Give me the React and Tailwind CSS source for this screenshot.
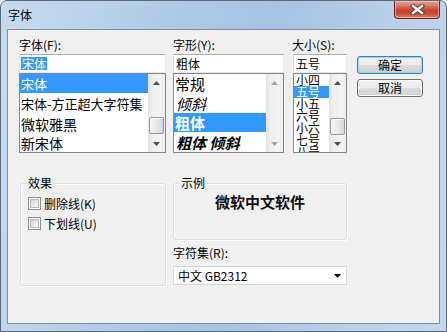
import React from "react";

function Arrow({ down, color = "#4d4d4d" }) {
  return (
    <svg width="7" height="4" viewBox="0 0 7 4">
      <path d={down ? "M0 0H7L3.5 4Z" : "M0 4H7L3.5 0Z"} fill={color} />
    </svg>
  );
}

function VScroll({ thumb, disabled }) {
  const c = disabled ? "#a6a6a6" : "#4d4d4d";
  return (
    <div className="w-[17px] h-full flex flex-col shrink-0 bg-[linear-gradient(to_right,#e2e2e2,#eeeeee_25%,#f4f4f4_75%,#ececec)]">
      <div className="h-[17px] flex items-center justify-center">
        <Arrow color={c} />
      </div>
      <div className="flex-1">
        {thumb ? (
          <div
            className={
              "mx-[1px] rounded-[2px] border border-[#979797] bg-[linear-gradient(to_right,#f6f6f6,#e9e9e9_50%,#d6d6d6)] shadow-[inset_1px_1px_0_#ffffff] " +
              thumb
            }
          />
        ) : null}
      </div>
      <div className="h-[17px] flex items-center justify-center">
        <Arrow down color={c} />
      </div>
    </div>
  );
}

function TextInput({ children }) {
  return (
    <div className="h-[19px] bg-white border border-t-[#abadb3] border-l-[#dbdfe6] border-r-[#e3e9ef] border-b-[#e3e9ef] flex items-center pl-[1px] leading-[13px]">
      {children}
    </div>
  );
}

function Button({ children, def }) {
  return (
    <div
      className={
        "h-[18px] rounded-[3px] border flex items-center justify-center leading-[14px] bg-[linear-gradient(#f2f2f2,#ebebeb_48%,#dddddd_52%,#cfcfcf)] " +
        (def
          ? "border-[#3c7fb1] shadow-[inset_0_0_0_1px_#8fd6f9]"
          : "border-[#707070] shadow-[inset_0_0_0_1px_#fcfcfc]")
      }
    >
      {children}
    </div>
  );
}

function Checkbox({ label }) {
  return (
    <div className="flex items-center gap-[3px] h-[13px]">
      <div className="w-[13px] h-[13px] border border-[#8e8f8f] bg-white p-[1px]">
        <div className="w-full h-full border border-[#b9b9b9] bg-[linear-gradient(135deg,#d6d6d6,#f8f8f8)]" />
      </div>
      <span className="leading-[13px]">{label}</span>
    </div>
  );
}

function CloseButton() {
  return (
    <div className="w-[46px] h-[18px] rounded-b-[4px] border border-t-0 border-[#6a2a23] bg-[linear-gradient(#e8a898,#d77562_30%,#c7402b_55%,#c9493a_75%,#dc8672)] shadow-[inset_0_0_0_1px_rgba(255,210,200,0.5)] flex items-center justify-center">
      <svg width="15" height="11" viewBox="0 0 15 11">
        <path d="M3 2L12 9M12 2L3 9" stroke="#4b3c3a" strokeWidth="4.4" strokeLinecap="square" />
        <path d="M3 2L12 9M12 2L3 9" stroke="#ffffff" strokeWidth="2.4" strokeLinecap="square" />
      </svg>
    </div>
  );
}

export default function App() {
  return (
    <div className="w-[447px] h-[332px] bg-white font-['Noto_Sans_CJK_SC',sans-serif] text-[12px] text-black">
      <div className="w-full h-full flex flex-col rounded-t-[7px] border border-[#5d6878] bg-[linear-gradient(100deg,#c7dbef,#aecae6_35%,#a6c3e2_55%,#b9d0e9_80%,#c2d7ec)] px-[6px] pb-[7px]">
        <div className="h-[28px] flex items-start justify-between">
          <div className="pl-[1px] pt-[7px] leading-[14px]">字体</div>
          <CloseButton />
        </div>
        <div className="flex-1 border border-[#7c8ea3] bg-[#f0f0f0] flex flex-col pl-[11px] pt-[8px]">
          {/* top row */}
          <div className="flex items-start">
            {/* font */}
            <div className="w-[147px] flex flex-col">
              <div className="h-[16px] leading-[14px]">字体(F):</div>
              <TextInput>
                <span className="bg-[#3399ff] text-white h-[13px] leading-[13px] px-[1px]">宋体</span>
              </TextInput>
              <div className="h-[80px] border border-[#828790] bg-white flex">
                <div className="flex-1 flex flex-col overflow-hidden">
                  <div className="h-[19px] shrink-0 bg-[#3399ff] text-white pl-[1px] flex items-center text-[13px] leading-[15px]">宋体</div>
                  <div className="h-[20px] shrink-0 pl-[1px] flex items-center whitespace-nowrap text-[13px] leading-[15px]">宋体-方正超大字符集</div>
                  <div className="h-[21px] shrink-0 pl-[1px] flex items-center text-[14px] leading-[16px]">微软雅黑</div>
                  <div className="h-[18px] shrink-0 pl-[1px] flex items-center text-[14px] leading-[16px]">新宋体</div>
                </div>
                <VScroll thumb="mt-[26px] h-[17px]" />
              </div>
            </div>
            {/* style */}
            <div className="ml-[7px] w-[111px] flex flex-col">
              <div className="h-[16px] leading-[14px]">字形(Y):</div>
              <TextInput>
                <span className="pl-[1px]">粗体</span>
              </TextInput>
              <div className="h-[80px] border border-[#828790] bg-white flex">
                <div className="flex-1 flex flex-col overflow-hidden text-[15px] leading-[17px]">
                  <div className="h-[19px] shrink-0 pl-[1px] flex items-center">常规</div>
                  <div className="h-[20px] shrink-0 pl-[2px] flex items-center italic">倾斜</div>
                  <div className="h-[19px] shrink-0 bg-[#3399ff] text-white pl-[1px] flex items-center font-bold">粗体</div>
                  <div className="h-[20px] shrink-0 pl-[2px] flex items-center font-bold italic whitespace-nowrap">粗体 倾斜</div>
                </div>
                <VScroll disabled />
              </div>
            </div>
            {/* size */}
            <div className="ml-[9px] w-[54px] flex flex-col">
              <div className="h-[16px] leading-[14px] -ml-[1px] whitespace-nowrap">大小(S):</div>
              <TextInput>
                <span className="pl-[1px]">五号</span>
              </TextInput>
              <div className="h-[80px] border border-[#828790] bg-white flex">
                <div className="flex-1 flex flex-col overflow-hidden leading-[12px]">
                  <div className="h-[12px] shrink-0 pl-[2px]">小四</div>
                  <div className="h-[12px] shrink-0 pl-[2px] bg-[#3399ff] text-white">五号</div>
                  <div className="h-[12px] shrink-0 pl-[2px]">小五</div>
                  <div className="h-[12px] shrink-0 pl-[2px]">六号</div>
                  <div className="h-[12px] shrink-0 pl-[2px]">小六</div>
                  <div className="h-[12px] shrink-0 pl-[2px]">七号</div>
                  <div className="h-[12px] shrink-0 pl-[2px]">八号</div>
                </div>
                <VScroll thumb="mt-[27px] h-[17px]" />
              </div>
            </div>
            {/* buttons */}
            <div className="ml-[10px] w-[66px] pt-[18px] flex flex-col gap-[5px]">
              <Button def>确定</Button>
              <Button>取消</Button>
            </div>
          </div>
          {/* bottom row */}
          <div className="flex items-start mt-[30px]">
            <div className="relative ml-[1px] w-[146px] h-[103px] rounded-[3px] border border-[#d5dfe5] shadow-[inset_1px_1px_0_#ffffff,1px_1px_0_#ffffff]">
              <div className="absolute left-[6px] -top-[7px] px-[1px] bg-[#f0f0f0] leading-[12px]">效果</div>
              <div className="pl-[7px] pt-[13px] flex flex-col gap-[7px]">
                <Checkbox label="删除线(K)" />
                <Checkbox label="下划线(U)" />
              </div>
            </div>
            <div className="ml-[7px] w-[174px] flex flex-col">
              <div className="relative h-[57px] rounded-[3px] border border-[#d5dfe5] shadow-[inset_1px_1px_0_#ffffff,1px_1px_0_#ffffff] flex justify-center pt-[10px]">
                <div className="absolute left-[6px] -top-[7px] px-[1px] bg-[#f0f0f0] leading-[12px]">示例</div>
                <div className="text-[15px] leading-[15px] font-bold text-[#111]">微软中文软件</div>
              </div>
              <div className="mt-[6px] h-[14px] leading-[14px]">字符集(R):</div>
              <div className="mt-[6px] h-[19px] bg-white border border-[#d6d6d6] flex items-center justify-between pl-[4px] pr-[5px]">
                <span className="leading-[13px]">中文 GB2312</span>
                <svg width="7" height="4" viewBox="0 0 7 4">
                  <path d="M0 0H7L3.5 4Z" fill="#000" />
                </svg>
              </div>
            </div>
          </div>
        </div>
      </div>
    </div>
  );
}
